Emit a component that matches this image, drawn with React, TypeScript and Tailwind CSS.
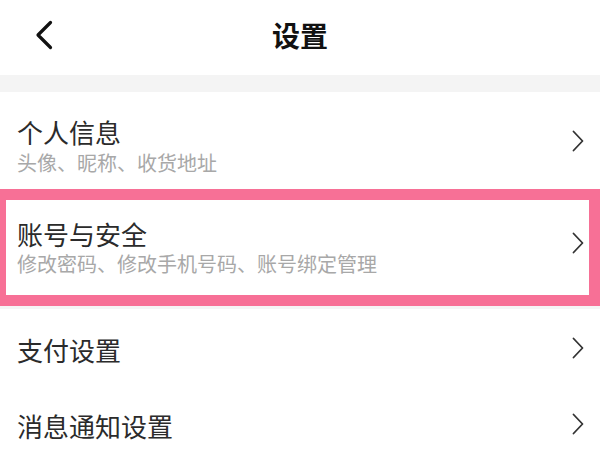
import React from "react";

const font = { fontFamily: '"Noto Sans CJK SC", "Noto Sans", sans-serif' };

function Chevron({ className = "" }: { className?: string }) {
  return (
    <svg width="12" height="22" viewBox="0 0 12 22" className={className} fill="none">
      <path d="M1.5 1.5 L10.5 11 L1.5 20.5" stroke="#333" strokeWidth="1.8" strokeLinecap="round" strokeLinejoin="round" />
    </svg>
  );
}

type Item = { title: string; sub?: string };

const items: Item[] = [
  { title: "个人信息", sub: "头像、昵称、收货地址" },
  { title: "账号与安全", sub: "修改密码、修改手机号码、账号绑定管理" },
  { title: "支付设置" },
  { title: "消息通知设置" },
];

export default function App() {
  return (
    <div className="w-[600px] h-[450px] overflow-hidden bg-white" style={font}>
      {/* header */}
      <div className="grid grid-cols-[1fr_auto_1fr] items-start h-[75px]">
        <div>
          <svg width="20" height="32" viewBox="0 0 20 32" fill="none" className="mt-[19px] ml-[34px]">
            <path d="M16.5 3.5 L4 16 L16.5 28.5" stroke="#111" strokeWidth="3.2" strokeLinecap="round" strokeLinejoin="round" />
          </svg>
        </div>
        <h1 className="mt-[21px] text-[28px] leading-[28px] font-bold text-[#111]">设置</h1>
        <div />
      </div>

      <div className="h-[17px] bg-[#f4f4f4]" />

      {/* row 1 */}
      <div className="flex justify-between items-start h-[97px] pl-[17px] pr-[16px]">
        <div className="pt-[27px]">
          <div className="text-[26px] leading-[26px] text-[#2b2b2b]">{items[0].title}</div>
          <div className="mt-[8px] text-[20px] leading-[20px] text-[#a8a8a8]">{items[0].sub}</div>
        </div>
        <Chevron className="mt-[38px]" />
      </div>

      {/* highlighted row */}
      <div className="border-t-[11px] border-b-[11px] border-l-[6px] border-r-[11px] border-[#f77096]">
        <div className="flex justify-between items-start h-[95px] pl-[11px] pr-[5px]">
          <div className="pt-[21px]">
            <div className="text-[26px] leading-[26px] text-[#2b2b2b]">{items[1].title}</div>
            <div className="mt-[7px] text-[20px] leading-[20px] text-[#a8a8a8]">{items[1].sub}</div>
          </div>
          <Chevron className="mt-[32px]" />
        </div>
      </div>

      <div className="h-[3px] bg-[#f5f5f5]" />

      {items.slice(2).map((it) => (
        <div key={it.title} className="flex justify-between items-start h-[76px] pl-[17px] pr-[16px]">
          <div className="pt-[28px] text-[26px] leading-[26px] text-[#2b2b2b]">{it.title}</div>
          <Chevron className="mt-[28px]" />
        </div>
      ))}
    </div>
  );
}
